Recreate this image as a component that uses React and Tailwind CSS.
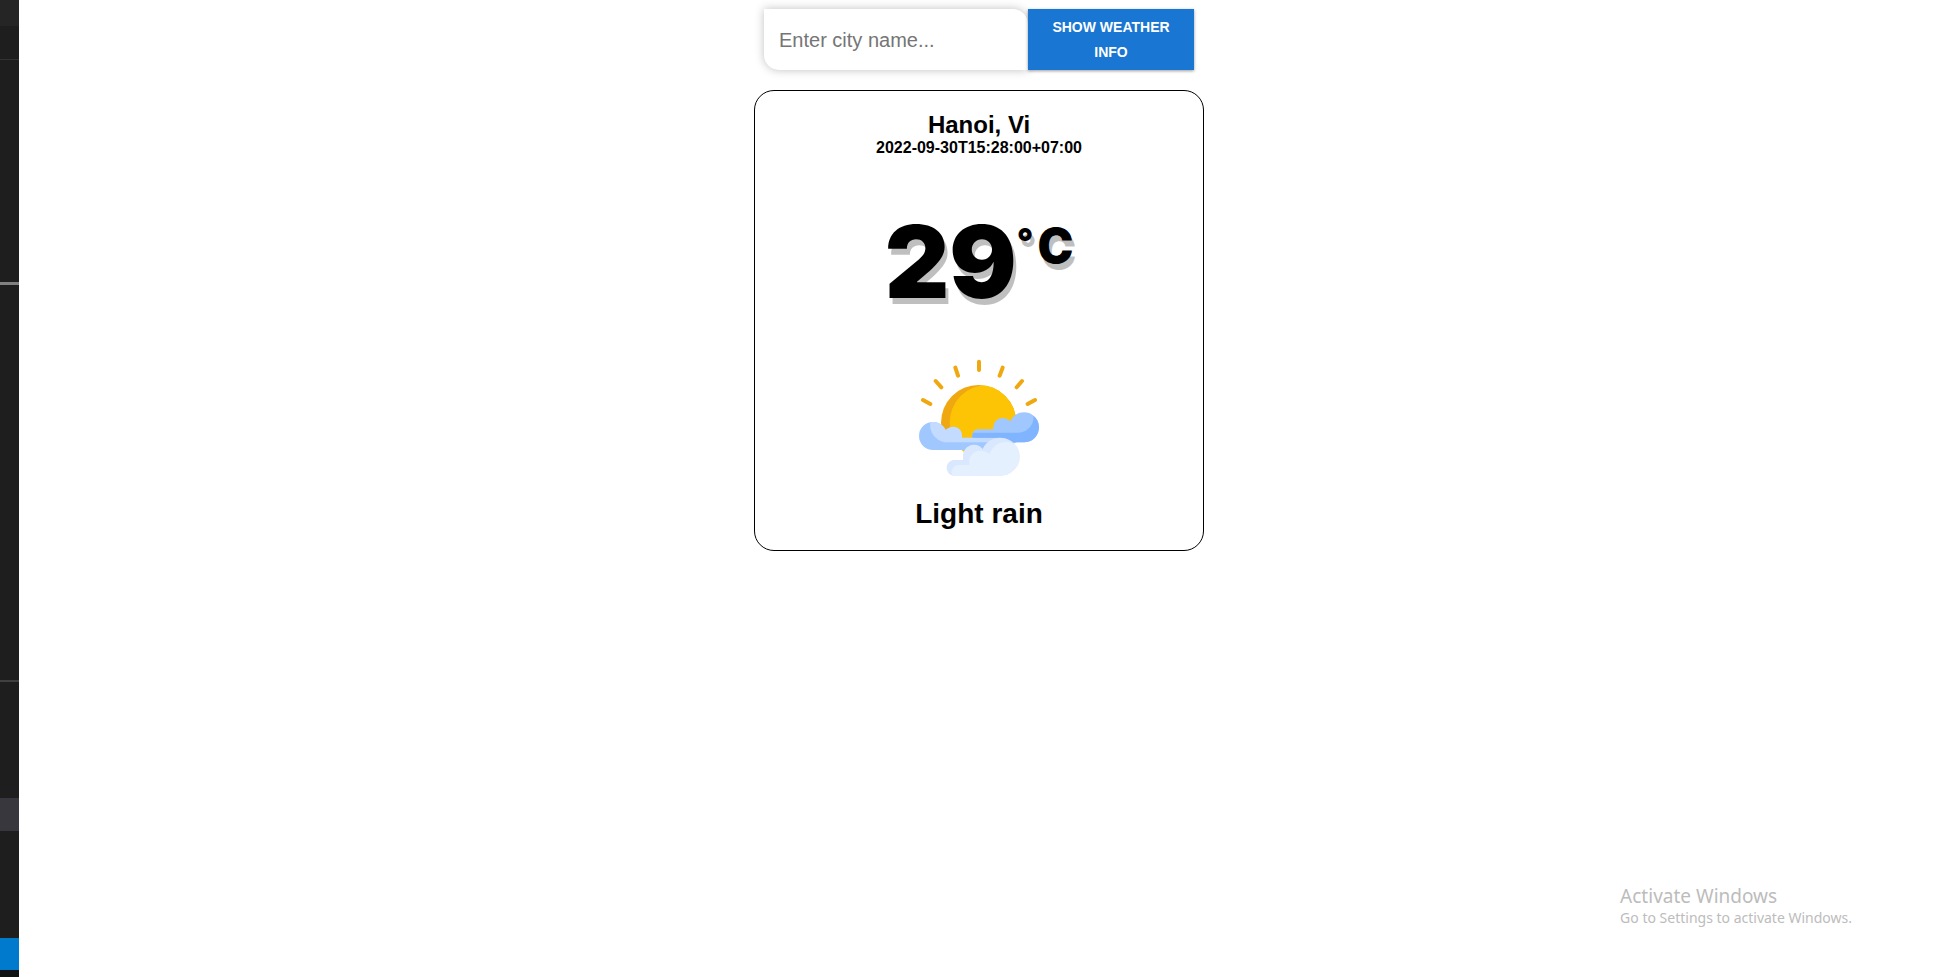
const STRIP = [
  "h-[26px] bg-[#252526]",
  "h-[33px] bg-[#1e1e1e]",
  "h-px bg-[#333333]",
  "h-[222px] bg-[#1e1e1e]",
  "h-[3px] bg-[#808080]",
  "grow bg-[#1e1e1e]",
  "h-0.5 bg-[#404040]",
  "h-[116px] bg-[#1e1e1e]",
  "h-[33px] bg-[#37373d]",
  "h-[107px] bg-[#1e1e1e]",
  "h-8 bg-[#007acc]",
  "h-[7px] bg-[#101314]",
];

function EditorStrip() {
  return (
    <div aria-hidden="true" className="flex w-[19px] shrink-0 flex-col">
      {STRIP.map((band, i) => (
        <div key={i} className={band} />
      ))}
    </div>
  );
}

function PartlyCloudyIcon() {
  return (
    <svg viewBox="57 39 360 360" className="size-[120px]" role="img" aria-label="Light rain">
      <defs>
        <clipPath id="sun">
          <circle cx="236" cy="233" r="113" />
        </clipPath>
      </defs>
      <g stroke="#f0a810" strokeWidth="12" strokeLinecap="round">
        <path d="M237 50V75M166 68L174 92M308 68L299 92M107 108L124 127M366 108L350 127M69 165L91 177M405 165L383 177" />
      </g>
      <g clipPath="url(#sun)">
        <rect x="110" y="110" width="250" height="169" fill="#f0a810" />
        <rect x="186" y="233" width="60" height="46" fill="#fdc305" />
        <circle cx="262" cy="233" r="113" fill="#fdc305" />
      </g>
      <path
        d="M99 231C116 231 130 240 137 255C143 249 151 245 160 245C174 245 186 257 186 271V278H350V292L300 315H99A42 42 0 0 1 99 231Z"
        fill="#a0c8ff"
      />
      <path
        d="M91 232C113 228 130 240 137 255C143 249 151 245 160 245C174 245 186 257 186 271V278H330V292H134C105 286 87 261 91 232Z"
        fill="#c2dbff"
      />
      <path
        d="M217 278V271C217 261 225 253 235 253H280V247C280 232 292 219 308 219C317 219 325 223 331 229C338 212 354 202 372 202A45 45 0 0 1 372 292H340L300 278Z"
        fill="#a0c8ff"
      />
      <path
        d="M217 278V271C217 268 218 265 220 263H352C384 263 403 238 400 212C411 220 417 233 417 247A45 45 0 0 1 372 292H340L300 278Z"
        fill="#80b4ff"
      />
      <path
        d="M159 392A24 24 0 0 1 159 345H189V335A33 33 0 0 1 248 312A57 57 0 1 1 302 392Z"
        fill="#d9e8ff"
      />
      <path
        d="M159 392C155 388 154 383 155 379C157 367 167 360 178 360H208V349C208 319 244 306 269 328C279 294 319 282 347 299A57 57 0 0 1 302 392Z"
        fill="#e5f0ff"
      />
    </svg>
  );
}

function SearchForm() {
  return (
    <form
      className="mx-auto flex h-[61px] w-[430px] max-w-full items-stretch"
      onSubmit={(e) => e.preventDefault()}
    >
      <input
        type="text"
        aria-label="City name"
        placeholder="Enter city name..."
        className="min-w-0 flex-1 rounded-tr-[15px] rounded-bl-[15px] bg-white px-[15px] text-xl text-black shadow-[0_0_10px_rgba(0,0,0,0.25)] outline-none placeholder:text-[#757575]"
      />
      <button
        type="submit"
        className="relative w-[166px] bg-[#1976d2] px-4 text-sm leading-[25px] font-bold text-white uppercase shadow-[0_1px_3px_rgba(0,0,0,0.4)]"
      >
        Show weather info
      </button>
    </form>
  );
}

function WeatherCard() {
  return (
    <section className="mx-auto mt-5 flex w-[450px] max-w-full flex-col items-center rounded-[20px] border border-black py-5 text-center text-black">
      <h1 className="text-2xl leading-7 font-bold">Hanoi, Vi</h1>
      <p className="text-base leading-[18px] font-bold">2022-09-30T15:28:00+07:00</p>
      <p className="mt-[35px] flex items-start font-[Inter,sans-serif] text-[100px] leading-[140px] font-black [text-shadow:3px_6px_rgba(0,0,0,0.25)]">
        29
        <span className="mr-1 text-4xl leading-[98px]">°</span>
        <span className="text-5xl leading-[108px]">C</span>
      </p>
      <div className="mt-[26px]">
        <PartlyCloudyIcon />
      </div>
      <h2 className="mt-5 text-[28px] leading-8 font-bold">Light rain</h2>
    </section>
  );
}

export default function App() {
  return (
    <div className="flex min-h-screen bg-white font-['Liberation_Sans',Arial,sans-serif]">
      <EditorStrip />
      <main className="flex flex-1 flex-col pt-[9px]">
        <SearchForm />
        <WeatherCard />
        <aside className="mt-auto mr-[87px] mb-[49px] self-end font-['Noto_Sans',sans-serif] text-[#bcbcbc]">
          <p className="text-[19px] leading-6">Activate Windows</p>
          <p className="text-sm leading-5">Go to Settings to activate Windows.</p>
        </aside>
      </main>
    </div>
  );
}
